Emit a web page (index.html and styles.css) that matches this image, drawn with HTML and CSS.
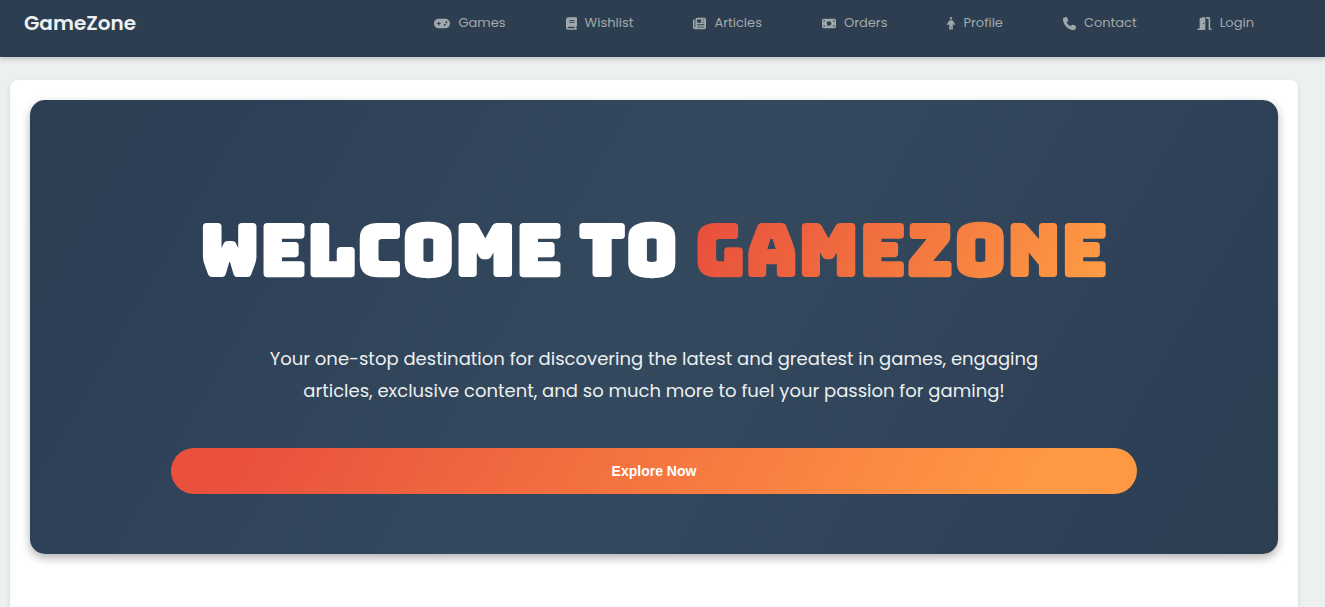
FILE: index.html
```html
<!DOCTYPE html>
<html lang="en">
<head>
  <meta charset="UTF-8">
  <meta name="viewport" content="width=device-width, initial-scale=1">
  <title>GameZone</title>
  <link rel="stylesheet" href="styles.css">
</head>
<body>

  <header class="navbar">
    <a class="logo" href="#">GameZone</a>
    <nav class="nav-links">
      <a href="#">
        <svg viewBox="0 0 640 512" width="16" height="13" aria-hidden="true"><path fill-rule="evenodd" d="M192 64C86 64 0 150 0 256S86 448 192 448H448c106 0 192-86 192-192S554 64 448 64H192zM496 168a40 40 0 1 1 0 80 40 40 0 1 1 0-80zM392 304a40 40 0 1 1 80 0 40 40 0 1 1-80 0zM168 200c0-13 11-24 24-24s24 11 24 24v32h32c13 0 24 11 24 24s-11 24-24 24H216v32c0 13-11 24-24 24s-24-11-24-24V280H136c-13 0-24-11-24-24s11-24 24-24h32V200z"/></svg>
        Games
      </a>
      <a href="#">
        <svg viewBox="0 0 448 512" width="11" height="13" aria-hidden="true"><path fill-rule="evenodd" d="M96 0C43 0 0 43 0 96V416c0 53 43 96 96 96H384h32c18 0 32-14 32-32s-14-32-32-32V384c18 0 32-14 32-32V32c0-18-14-32-32-32H384 96zm0 384H352v64H96c-18 0-32-14-32-32s14-32 32-32zm32-240c0-9 7-16 16-16H336c9 0 16 7 16 16s-7 16-16 16H144c-9 0-16-7-16-16zm16 48H336c9 0 16 7 16 16s-7 16-16 16H144c-9 0-16-7-16-16s7-16 16-16z"/></svg>
        Wishlist
      </a>
      <a href="#">
        <svg viewBox="0 0 512 512" width="13" height="13" aria-hidden="true"><path fill-rule="evenodd" d="M96 96c0-35 29-64 64-64H448c35 0 64 29 64 64V416c0 35-29 64-64 64H80c-44 0-80-36-80-80V128c0-18 14-32 32-32s32 14 32 32V400c0 9 7 16 16 16s16-7 16-16V96zm64 24v80c0 13 11 24 24 24H296c13 0 24-11 24-24V120c0-13-11-24-24-24H184c-13 0-24 11-24 24zm208-8c0 9 7 16 16 16h48c9 0 16-7 16-16s-7-16-16-16H384c-9 0-16 7-16 16zm0 96c0 9 7 16 16 16h48c9 0 16-7 16-16s-7-16-16-16H384c-9 0-16 7-16 16zM160 304c0 9 7 16 16 16H432c9 0 16-7 16-16s-7-16-16-16H176c-9 0-16 7-16 16zm0 96c0 9 7 16 16 16H432c9 0 16-7 16-16s-7-16-16-16H176c-9 0-16 7-16 16z"/></svg>
        Articles
      </a>
      <a href="#">
        <svg viewBox="0 0 576 512" width="14" height="13" aria-hidden="true"><path fill-rule="evenodd" d="M64 64C29 64 0 93 0 128V384c0 35 29 64 64 64H512c35 0 64-29 64-64V128c0-35-29-64-64-64H64zm64 320H64V320c35 0 64 29 64 64zM64 192V128h64c0 35-29 64-64 64zM448 384c0-35 29-64 64-64v64H448zm64-192c-35 0-64-29-64-64h64v64zM288 160a96 96 0 1 1 0 192 96 96 0 1 1 0-192z"/></svg>
        Orders
      </a>
      <a href="#">
        <svg viewBox="0 0 320 512" width="8" height="13" aria-hidden="true"><path d="M112 48a48 48 0 1 1 96 0 48 48 0 1 1-96 0zm40 304V480c0 18-14 32-32 32s-32-14-32-32V257L59 304c-9 15-29 20-44 11s-20-29-11-44l58-97c18-29 49-46 82-46h31c34 0 65 18 82 46l58 97c9 15 4 35-11 44s-35 4-44-11l-28-47V480c0 18-14 32-32 32s-32-14-32-32V352h-16z"/></svg>
        Profile
      </a>
      <a href="#">
        <svg viewBox="0 0 512 512" width="13" height="13" aria-hidden="true"><path d="M165 25c-8-19-29-29-49-24l-88 24C12 30 0 46 0 64c0 247 201 448 448 448 18 0 34-12 39-29l24-88c5-20-5-41-24-49l-96-40c-16-7-35-2-46 12l-41 49c-70-33-127-90-160-160l49-41c14-11 19-30 12-46L165 25z"/></svg>
        Contact
      </a>
      <a href="#">
        <svg viewBox="0 0 576 512" width="15" height="13" aria-hidden="true"><path fill-rule="evenodd" d="M320 32c0-10-5-19-12-25S290-2 281 1l-160 40C107 45 96 57 96 72V448H32c-18 0-32 14-32 32s14 32 32 32H288c18 0 32-14 32-32V32zM256 288c-13 0-24-14-24-32s11-32 24-32 24 14 24 32-11 32-24 32zM352 64h96V480c0 18 14 32 32 32h64c18 0 32-14 32-32s-14-32-32-32H512V64c0-35-29-64-64-64H352v64z"/></svg>
        Login
      </a>
    </nav>
  </header>

  <main class="container">
    <section class="hero">
      <h1>WELCOME TO <span class="highlight">GAMEZONE</span></h1>
      <p>Your one-stop destination for discovering the latest and greatest in games, engaging articles, exclusive content, and so much more to fuel your passion for gaming!</p>
      <button class="cta" type="button">Explore Now</button>
    </section>
  </main>

</body>
</html>
```
FILE: styles.css
```css
* {
  box-sizing: border-box;
}
body {
  margin: 0;
  font-family: 'Poppins', 'Inter', sans-serif;
  background-color: #ecf0f1;
}
.navbar {
  display: flex;
  justify-content: space-between;
  align-items: flex-start;
  height: 57px;
  padding: 8px 71px 0 24px;
  background-color: #2c3e50;
  box-shadow: 0 2px 5px rgba(0, 0, 0, 0.2);
}
.navbar a {
  text-decoration: none;
  line-height: 30px;
}
.logo {
  color: #ecf0f1;
  font-size: 20px;
  font-weight: 600;
}
.nav-links {
  display: flex;
  gap: 60px;
}
.nav-links a {
  display: flex;
  align-items: center;
  gap: 8px;
  color: #a3a9ad;
  font-size: 13px;
}
.nav-links svg {
  fill: #a0a8ab;
}
.container {
  min-height: 527px;
  margin: 23px 27px 0 10px;
  padding: 20px;
  background-color: #fff;
  border-radius: 8px 8px 0 0;
  box-shadow: 0 2px 5px rgba(0, 0, 0, 0.1);
}
.hero {
  display: flex;
  flex-direction: column;
  align-items: center;
  padding: 100px 20px 60px;
  border-radius: 15px;
  background: linear-gradient(120deg, #2c3e50, #2e4057 15%, #34495e 50%, #2e4057 85%, #2c3e50);
  box-shadow: 0 4px 10px rgba(0, 0, 0, 0.3);
  color: #ecf0f1;
  text-align: center;
}
.hero h1 {
  margin: 0 0 41px;
  color: #fff;
  font-family: 'Bungee', 'Inter', sans-serif;
  font-size: 72px;
  font-weight: 900;
  line-height: 102px;
}
.highlight {
  background: linear-gradient(120deg, #e74c3c, #ff9f43);
  -webkit-background-clip: text;
  background-clip: text;
  color: transparent;
}
.hero p {
  max-width: 800px;
  margin: 0 0 41px;
  font-size: 18px;
  line-height: 32px;
}
.cta {
  width: 80%;
  height: 46px;
  border: none;
  border-radius: 23px;
  background: linear-gradient(120deg, #e9513d 8%, #ff9843 88%);
  color: #fff;
  font-family: 'Liberation Sans', Arial, sans-serif;
  font-size: 14px;
  font-weight: bold;
  cursor: pointer;
}
```
